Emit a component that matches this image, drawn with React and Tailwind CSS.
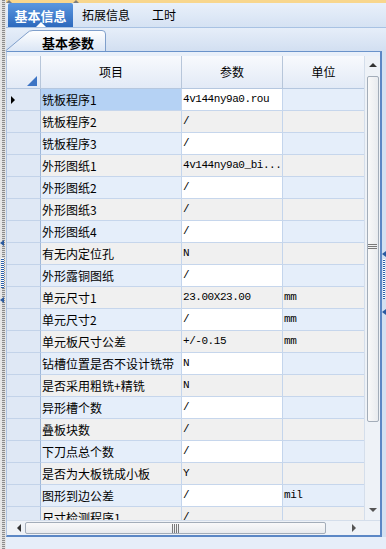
import React from "react";

const rows = [
  ["铣板程序1", "4v144ny9a0.rou", ""],
  ["铣板程序2", "/", ""],
  ["铣板程序3", "/", ""],
  ["外形图纸1", "4v144ny9a0_bi...", ""],
  ["外形图纸2", "/", ""],
  ["外形图纸3", "/", ""],
  ["外形图纸4", "/", ""],
  ["有无内定位孔", "N", ""],
  ["外形露铜图纸", "/", ""],
  ["单元尺寸1", "23.00X23.00", "mm"],
  ["单元尺寸2", "/", "mm"],
  ["单元板尺寸公差", "+/-0.15", "mm"],
  ["钻槽位置是否不设计铣带", "N", ""],
  ["是否采用粗铣+精铣", "N", ""],
  ["异形槽个数", "/", ""],
  ["叠板块数", "/", ""],
  ["下刀点总个数", "/", ""],
  ["是否为大板铣成小板", "Y", ""],
  ["图形到边公差", "/", "mil"],
  ["尺寸检测程序1", "/", ""],
];

function Row({ r, i }) {
  const odd = i % 2 === 0;
  const sel = i === 0;
  const cellBg = odd ? "bg-[#e5eefa]" : "bg-[#f0f0f0]";
  const paramBg = odd ? "bg-white" : "bg-[#f0f0f0]";
  return (
    <div className="grid grid-cols-[34px_141px_101px_81px] h-[22px] shrink-0">
      <div className="relative bg-[#dfe8f5] border-r border-r-[#9fb8d9] border-b border-b-[#c3d3e9] flex items-center">
        {sel && (
          <div className="ml-[4px] w-0 h-0 border-y-[4px] border-y-transparent border-l-[4px] border-l-black" />
        )}
      </div>
      <div
        className={`${sel ? "bg-[#b5d2f4]" : cellBg} border-r border-r-[#c4d5ec] border-b border-b-[#c6d6ec] pl-[1px] flex items-center text-[12px] leading-none whitespace-nowrap overflow-hidden`}
      >
        {r[0]}
      </div>
      <div
        className={`${paramBg} border-r border-r-[#c4d5ec] border-b border-b-[#c6d6ec] pl-[1px] flex items-center text-[11px] tracking-[-0.45px] leading-none whitespace-nowrap overflow-hidden [font-family:'Liberation_Mono',monospace]`}
      >
        {r[1]}
      </div>
      <div
        className={`${cellBg} border-b border-b-[#c6d6ec] pl-[1px] flex items-center text-[11px] tracking-[-0.45px] leading-none whitespace-nowrap overflow-hidden [font-family:'Liberation_Mono',monospace]`}
      >
        {r[2]}
      </div>
    </div>
  );
}

function Grip({ vertical }) {
  return vertical ? (
    <div className="flex flex-col gap-[1px] w-[9px]">
      <div className="h-[1px] bg-[#7a7a7a]" />
      <div className="h-[1px] bg-[#7a7a7a]" />
      <div className="h-[1px] bg-[#7a7a7a]" />
    </div>
  ) : (
    <div className="flex gap-[1px] h-[9px]">
      <div className="w-[1px] bg-[#7a7a7a]" />
      <div className="w-[1px] bg-[#7a7a7a]" />
      <div className="w-[1px] bg-[#7a7a7a]" />
      <div className="w-[1px] bg-[#7a7a7a]" />
    </div>
  );
}

export default function App() {
  return (
    <div className="w-[386px] h-[549px] overflow-hidden flex bg-[#e3ebf7] text-black [font-family:'Noto_Sans_CJK_SC','Noto_Sans',sans-serif]">
      {/* left gripper strip */}
      <div className="relative w-[6px] h-full shrink-0 bg-[#e6e6e6] flex justify-center">
        <div className="w-[3px] h-full bg-[repeating-linear-gradient(0deg,#8c8c8c_0px,#8c8c8c_1px,#dcdcdc_1px,#dcdcdc_2px)]" />
        <div className="absolute left-0 top-[240px] w-0 h-0 border-y-[3px] border-y-transparent border-r-[4px] border-r-[#2a5aa0]" />
        <div className="absolute left-[1px] top-[258px] w-[3px] h-[30px] bg-[repeating-linear-gradient(0deg,#2b5fa8_0px,#2b5fa8_1px,#ffffff_1px,#ffffff_2px)]" />
        <div className="absolute left-0 top-[297px] w-0 h-0 border-y-[3px] border-y-transparent border-r-[4px] border-r-[#2a5aa0]" />
      </div>

      <div className="w-[380px] flex flex-col">
        {/* orange top bar */}
        <div className="relative h-[3px] bg-[#f8d68d] shrink-0">
          <div className="absolute left-[0px] top-0 w-0 h-0 border-x-[3px] border-x-transparent border-b-[3px] border-b-[#7d7d7d]" />
          <div className="absolute left-[67px] top-0 w-0 h-0 border-x-[3px] border-x-transparent border-b-[3px] border-b-[#7d7d7d]" />
        </div>

        {/* main tab strip */}
        <div className="h-[25px] shrink-0 flex bg-gradient-to-b from-[#e9f0fa] to-[#d5e2f3] border-b border-b-[#a8c2e3]">
          <div className="relative ml-[2px] w-[65px] h-full rounded-t-[2px] bg-gradient-to-b from-[#5a97e0] to-[#2d69bd] flex items-center justify-center text-white text-[13px] font-bold leading-none">
            基本信息
            <div className="absolute bottom-0 left-[28px] w-0 h-0 border-x-[5px] border-x-transparent border-b-[5px] border-b-white" />
          </div>
          <div className="w-[70px] pl-[9px] flex items-center text-[12px] leading-none">拓展信息</div>
          <div className="pl-[9px] flex items-center text-[12px] leading-none">工时</div>
        </div>

        {/* inner tab strip */}
        <div className="h-[23px] shrink-0 flex items-end bg-gradient-to-b from-[#e6eef9] to-[#d2dff1]">
          <div className="relative w-[101px] h-[21px] ml-[-1px]">
            <svg className="absolute inset-0" width="101" height="21" viewBox="0 0 101 21">
              <defs>
                <linearGradient id="tg" x1="0" y1="0" x2="0" y2="1">
                  <stop offset="0" stopColor="#ffffff" />
                  <stop offset="1" stopColor="#dbe6f5" />
                </linearGradient>
              </defs>
              <path d="M0.5,21 L22,3 Q24,0.5 28,0.5 L97,0.5 Q100.5,0.5 100.5,4 L100.5,21" fill="url(#tg)" stroke="#7f9fcb" strokeWidth="1" />
            </svg>
            <div className="relative h-full pl-[37px] pt-[4px] flex items-center text-[13px] font-bold leading-none">基本参数</div>
          </div>
        </div>

        {/* panel row */}
        <div className="flex h-[486px] shrink-0">
          <div className="w-[376px] h-full flex flex-col border-t border-t-[#6a93ca] border-l border-l-[#aec4e2] border-r-2 border-r-[#5b87c5] border-b-2 border-b-[#5b87c5] bg-[#e9f0fa]">
            <div className="h-[4px] shrink-0" />
            <div className="flex h-[464px] shrink-0">
              {/* table */}
              <div className="w-[357px] h-full overflow-hidden flex flex-col bg-white">
                <div className="grid grid-cols-[34px_141px_101px_81px] h-[33px] shrink-0 bg-gradient-to-b from-[#f8fafd] to-[#e2eaf6] border-b border-b-[#b5c7df] text-[12px] leading-none">
                  <div className="relative border-r border-r-[#b7c6da]">
                    <div className="absolute right-[3px] bottom-[2px] w-0 h-0 border-l-[10px] border-l-transparent border-b-[10px] border-b-[#3d74c4]" />
                  </div>
                  <div className="border-r border-r-[#b7c6da] flex items-center justify-center">项目</div>
                  <div className="border-r border-r-[#b7c6da] flex items-center justify-center">参数</div>
                  <div className="flex items-center justify-center">单位</div>
                </div>
                {rows.map((r, i) => (
                  <Row key={i} r={r} i={i} />
                ))}
              </div>
              {/* vertical scrollbar */}
              <div className="relative w-[16px] h-full bg-[#eef2f7] border-l border-l-[#d4deeb] flex flex-col items-center">
                <div className="mt-[7px] w-0 h-0 border-x-[4px] border-x-transparent border-b-[4px] border-b-[#333]" />
                <div className="mt-[9px] w-[12px] h-[346px] rounded-[2px] border border-[#a3adb9] bg-gradient-to-r from-[#f9f9f9] to-[#e8ebef] flex items-center justify-center">
                  <div className="mt-[-170px]" />
                </div>
                <div className="absolute top-[188px] left-[3px]">
                  <Grip vertical />
                </div>
                <div className="absolute top-[452px] left-[4px] w-0 h-0 border-x-[4px] border-x-transparent border-t-[4px] border-t-[#555]" />
              </div>
            </div>
            {/* horizontal scrollbar */}
            <div className="relative h-[15px] shrink-0 bg-[#eef2f7] border-t border-t-[#d4deeb] flex items-center">
              <div className="ml-[10px] w-0 h-0 border-y-[4px] border-y-transparent border-r-[4px] border-r-[#333]" />
              <div className="ml-[4px] w-[301px] h-[12px] rounded-[2px] border border-[#a3adb9] bg-gradient-to-b from-[#f9f9f9] to-[#e8ebef] flex items-center justify-center">
                <Grip />
              </div>
              <div className="ml-[26px] w-0 h-0 border-y-[4px] border-y-transparent border-l-[4px] border-l-[#555]" />
            </div>
          </div>
          {/* right strip */}
          <div className="relative w-[4px] h-full bg-[#d3e0f1]">
            <div className="absolute left-0 top-[200px] w-0 h-0 border-y-[3px] border-y-transparent border-r-[4px] border-r-[#2a5aa0]" />
            <div className="absolute left-[1px] top-[208px] w-[2px] h-[40px] bg-[repeating-linear-gradient(0deg,#2b5fa8_0px,#2b5fa8_1px,#ffffff_1px,#ffffff_2px)]" />
            <div className="absolute left-0 top-[258px] w-0 h-0 border-y-[3px] border-y-transparent border-r-[4px] border-r-[#2a5aa0]" />
          </div>
        </div>

        <div className="flex-1 bg-[#e6eef9]" />
      </div>
    </div>
  );
}
